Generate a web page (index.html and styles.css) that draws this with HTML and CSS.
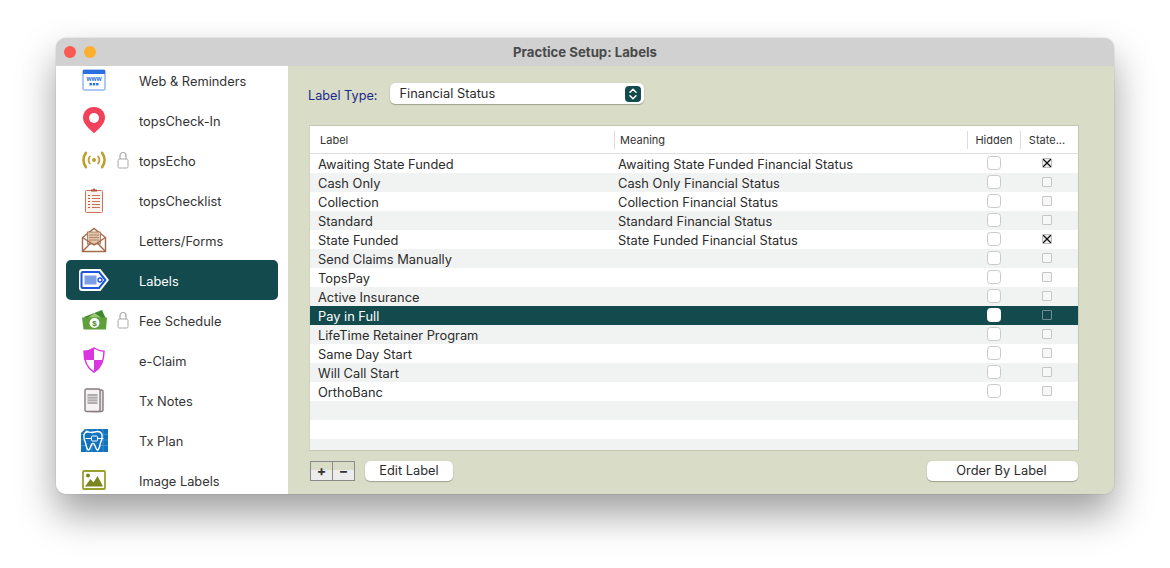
FILE: index.html
```html
<!DOCTYPE html>
<html lang="en">
<head>
<meta charset="utf-8">
<title>Practice Setup: Labels</title>
<link rel="stylesheet" href="styles.css">
</head>
<body>
<div class="window">
  <header class="titlebar">
    <span class="dot dot-red"></span>
    <span class="dot dot-orange"></span>
    <span class="title">Practice Setup: Labels</span>
  </header>
  <div class="content">
    <nav class="sidebar">
      <ul class="nav-list">
        <li class="nav-row">
          <span class="nav-icon"><svg width="24" height="22" viewBox="0 0 24 22"><rect x="1" y="1" width="22" height="20" rx="1" fill="#fff" stroke="#5f93ea"/><rect x="1" y="1" width="22" height="4" fill="#2a6fe0"/><text x="12" y="12" text-anchor="middle" class="www">www</text><rect x="7.500" y="14" width="2.400" height="2.400" fill="#2a6fe0"/><rect x="10.800" y="14" width="2.400" height="2.400" fill="#2a6fe0"/><rect x="14.100" y="14" width="2.400" height="2.400" fill="#2a6fe0"/></svg></span>
          <span class="nav-lock"></span><span class="nav-text">Web &amp; Reminders</span>
        </li>
        <li class="nav-row">
          <span class="nav-icon"><svg width="24" height="28" viewBox="0 0 24 28"><path d="M12 1C5.600 1 1 5.600 1 11.600c0 6 6 11.600 11 15.600 5-4 11-9.600 11-15.600C23 5.600 18.400 1 12 1z" fill="#f2415a"/><circle cx="12" cy="12" r="5" fill="#fff"/></svg></span>
          <span class="nav-lock"></span><span class="nav-text">topsCheck-In</span>
        </li>
        <li class="nav-row">
          <span class="nav-icon"><svg width="24" height="18" viewBox="0 0 24 18" fill="none" stroke="#bf9f30" stroke-linecap="round"><circle cx="12" cy="9" r="2" fill="#bf9f30" stroke="none"/><path d="M7.800 5.500a6 6 0 0 0 0 7M16.200 5.500a6 6 0 0 1 0 7" stroke-width="1.800"/><path d="M3.800 2a12 12 0 0 0 0 14M20.200 2a12 12 0 0 1 0 14" stroke-width="2.800"/></svg></span>
          <span class="nav-lock"><svg class="lock" width="12" height="18" viewBox="0 0 12 18"><path d="M3 8V4.500a3 3 0 0 1 6 0V8" fill="none" stroke="#a8a8a8" stroke-width="1.200"/><rect x="1" y="8" width="10" height="9" rx="1.500" fill="#fff" stroke="#a8a8a8"/></svg></span><span class="nav-text">topsEcho</span>
        </li>
        <li class="nav-row">
          <span class="nav-icon"><svg width="20" height="26" viewBox="0 0 20 26"><rect x="1.500" y="3.500" width="17" height="22" rx="1" fill="#fdf3ee" stroke="#c9745a"/><path d="M7 4.500V2.500h2L10 1l1 1.500h2v2z" fill="#b5533a"/><g stroke="#c9745a" stroke-width="1"><path d="M8 8.500h8M8 11.500h8M8 14.500h8M8 17.500h8M8 20.500h8"/><path d="M4 8.500h2M4 11.500h2M4 14.500h2M4 17.500h2M4 20.500h2" stroke="#d84a30"/></g></svg></span>
          <span class="nav-lock"></span><span class="nav-text">topsChecklist</span>
        </li>
        <li class="nav-row">
          <span class="nav-icon"><svg width="26" height="26" viewBox="0 0 26 26"><path d="M1.500 10.500 13 1.500l11.500 9v14h-23z" fill="#fff" stroke="#a5694a" stroke-width="1.400"/><rect x="6.500" y="5" width="13" height="12" fill="#e2c6ae" stroke="#a5694a" stroke-width=".8"/><path d="M8 8h10M8 10.500h10M8 13h10" stroke="#b08468"/><path d="M1.500 10.500 13 18l11.500-7.500M1.500 24.500 10 15.800M24.500 24.500 16 15.800" fill="none" stroke="#a5694a" stroke-width="1.400"/></svg></span>
          <span class="nav-lock"></span><span class="nav-text">Letters/Forms</span>
        </li>
        <li class="nav-row nav-row-active">
          <span class="nav-icon"><svg width="32" height="24" viewBox="0 0 32 24"><path d="M4 1h18.500L31 12l-8.500 11H4a3 3 0 0 1-3-3V4a3 3 0 0 1 3-3z" fill="#fff"/><path d="M5 4h16l6.500 8-6.500 8H5a1.500 1.500 0 0 1-1.500-1.500v-13A1.500 1.500 0 0 1 5 4z" fill="#fff" stroke="#1d55e0" stroke-width="2"/><rect x="6.500" y="7.500" width="12" height="9" fill="#7f9ee8"/><circle cx="22" cy="12" r="2" fill="#fff" stroke="#1d55e0" stroke-width="1.400"/></svg></span>
          <span class="nav-lock"></span><span class="nav-text">Labels</span>
        </li>
        <li class="nav-row">
          <span class="nav-icon"><svg width="27" height="20" viewBox="0 0 27 20"><path d="M3 7 21 0l4 9-16 6z" fill="#3f8a2c"/><path d="M1 7.500h25L25 19.500H2.500z" fill="#5f9e3a"/><path d="M7 7.500 13.500 3 20 7.500z" fill="#9cc873"/><circle cx="13.500" cy="13" r="5" fill="#fff"/><text x="13.500" y="16" text-anchor="middle" class="dollar">$</text></svg></span>
          <span class="nav-lock"><svg class="lock" width="12" height="18" viewBox="0 0 12 18"><path d="M3 8V4.500a3 3 0 0 1 6 0V8" fill="none" stroke="#a8a8a8" stroke-width="1.200"/><rect x="1" y="8" width="10" height="9" rx="1.500" fill="#fff" stroke="#a8a8a8"/></svg></span><span class="nav-text">Fee Schedule</span>
        </li>
        <li class="nav-row">
          <span class="nav-icon"><svg width="22" height="26" viewBox="0 0 22 26"><path d="M11 1C8 3 4.500 4 1 4.200c0 9 2.500 16.500 10 21 7.500-4.500 10-12 10-21C17.500 4 14 3 11 1z" fill="#fff" stroke="#d936e0" stroke-width="1.500"/><path d="M11 1v12H1.300C1 10 1 7 1 4.200 4.500 4 8 3 11 1zM11 13h9.200C19 18 16 22 11 25.200z" fill="#d936e0"/></svg></span>
          <span class="nav-lock"></span><span class="nav-text">e-Claim</span>
        </li>
        <li class="nav-row">
          <span class="nav-icon"><svg width="20" height="25" viewBox="0 0 20 25"><rect x="6" y="2" width="13" height="21.500" rx="1.500" fill="#e6e2e4" stroke="#867a80" stroke-width="1.400"/><rect x="1" y="1" width="15" height="22.500" rx="1.500" fill="#f4f2f3" stroke="#867a80" stroke-width="1.400"/><rect x="3.500" y="6" width="10" height="10" fill="#b0acae"/><path d="M3.500 8.500h10M3.500 11h10M3.500 13.500h10" stroke="#d6d3d4"/></svg></span>
          <span class="nav-lock"></span><span class="nav-text">Tx Notes</span>
        </li>
        <li class="nav-row">
          <span class="nav-icon"><svg width="27" height="23" viewBox="0 0 27 23"><path d="M4 0h23v23H0V4z" fill="#1272bd"/><path d="M0 5.500h27M0 11h27M0 16.500h27M5.500 0v23M11 0v23M16.500 0v23M22 0v23" stroke="#5aa3dc" stroke-width=".6"/><path d="M7.500 2.500c-4 0-5 3-4.500 6.500.5 3 1.500 4 2 7 .5 2 1 5 2.500 5s1.800-3 3-5.500c.7-1.300 2.300-1.300 3 0 1.200 2.500 1.500 5.500 3 5.500s2-3 2.500-5c.5-3 1.500-4 2-7 .5-3.500-.5-6.500-4.500-6.500-2 0-4 1-6 1s-3-1-6-1z" fill="#1272bd" stroke="#fff" stroke-width="1.400"/><path d="M4.500 9.500h18" stroke="#fff"/><rect x="10.500" y="7" width="6" height="5" rx="1" fill="#1272bd" stroke="#fff"/></svg></span>
          <span class="nav-lock"></span><span class="nav-text">Tx Plan</span>
        </li>
        <li class="nav-row">
          <span class="nav-icon"><svg width="24" height="20" viewBox="0 0 24 20"><rect x="1" y="1" width="22" height="18" rx="1" fill="#fff" stroke="#98a030" stroke-width="1.800"/><circle cx="6" cy="5.500" r="2" fill="#7a861c"/><path d="M3 16.500 8.500 9l3 3.500L15.500 6 21 16.500z" fill="#7a861c"/></svg></span>
          <span class="nav-lock"></span><span class="nav-text">Image Labels</span>
        </li>
      </ul>
    </nav>
    <main class="panel">
      <div class="type-row">
        <span class="type-label">Label Type:</span>
        <div class="select">
          <span class="select-text">Financial Status</span>
          <span class="select-arrows"><svg width="10" height="14" viewBox="0 0 10 14" fill="none" stroke="#fff" stroke-width="1.500" stroke-linecap="round" stroke-linejoin="round"><path d="M2 5.200 5 2.200l3 3M2 8.800l3 3 3-3"/></svg></span>
        </div>
      </div>
      <div class="table">
        <div class="thead">
          <span class="th col-label">Label</span>
          <span class="th col-meaning">Meaning</span>
          <span class="th col-hidden">Hidden</span>
          <span class="th col-state">State...</span>
        </div>
        <div class="row"><span class="td col-label">Awaiting State Funded</span><span class="td col-meaning">Awaiting State Funded Financial Status</span><span class="col-hidden"><span class="check"></span></span><span class="col-state"><span class="mini mini-x"><svg width="8" height="8" viewBox="0 0 8 8"><path d="M0 0l8 8M8 0l-8 8" stroke="#111" stroke-width="1.300"/></svg></span></span></div>
        <div class="row"><span class="td col-label">Cash Only</span><span class="td col-meaning">Cash Only Financial Status</span><span class="col-hidden"><span class="check"></span></span><span class="col-state"><span class="mini"></span></span></div>
        <div class="row"><span class="td col-label">Collection</span><span class="td col-meaning">Collection Financial Status</span><span class="col-hidden"><span class="check"></span></span><span class="col-state"><span class="mini"></span></span></div>
        <div class="row"><span class="td col-label">Standard</span><span class="td col-meaning">Standard Financial Status</span><span class="col-hidden"><span class="check"></span></span><span class="col-state"><span class="mini"></span></span></div>
        <div class="row"><span class="td col-label">State Funded</span><span class="td col-meaning">State Funded Financial Status</span><span class="col-hidden"><span class="check"></span></span><span class="col-state"><span class="mini mini-x"><svg width="8" height="8" viewBox="0 0 8 8"><path d="M0 0l8 8M8 0l-8 8" stroke="#111" stroke-width="1.300"/></svg></span></span></div>
        <div class="row"><span class="td col-label">Send Claims Manually</span><span class="td col-meaning"></span><span class="col-hidden"><span class="check"></span></span><span class="col-state"><span class="mini"></span></span></div>
        <div class="row"><span class="td col-label">TopsPay</span><span class="td col-meaning"></span><span class="col-hidden"><span class="check"></span></span><span class="col-state"><span class="mini"></span></span></div>
        <div class="row"><span class="td col-label">Active Insurance</span><span class="td col-meaning"></span><span class="col-hidden"><span class="check"></span></span><span class="col-state"><span class="mini"></span></span></div>
        <div class="row row-selected"><span class="td col-label">Pay in Full</span><span class="td col-meaning"></span><span class="col-hidden"><span class="check"></span></span><span class="col-state"><span class="mini"></span></span></div>
        <div class="row"><span class="td col-label">LifeTime Retainer Program</span><span class="td col-meaning"></span><span class="col-hidden"><span class="check"></span></span><span class="col-state"><span class="mini"></span></span></div>
        <div class="row"><span class="td col-label">Same Day Start</span><span class="td col-meaning"></span><span class="col-hidden"><span class="check"></span></span><span class="col-state"><span class="mini"></span></span></div>
        <div class="row"><span class="td col-label">Will Call Start</span><span class="td col-meaning"></span><span class="col-hidden"><span class="check"></span></span><span class="col-state"><span class="mini"></span></span></div>
        <div class="row"><span class="td col-label">OrthoBanc</span><span class="td col-meaning"></span><span class="col-hidden"><span class="check"></span></span><span class="col-state"><span class="mini"></span></span></div>
        <div class="row"></div>
        <div class="row"></div>
        <div class="row row-last"></div>
      </div>
      <div class="actions">
        <div class="stepper"><span class="step">+</span><span class="step">−</span></div>
        <span class="btn btn-edit">Edit Label</span>
        <span class="btn btn-order">Order By Label</span>
      </div>
    </main>
  </div>
</div>
</body>
</html>
```
FILE: styles.css
```css
* { box-sizing: border-box; }
html, body { margin: 0; height: 100%; }
body {
  background: #fff;
  padding: 38px 56px 0;
  overflow: hidden;
  font-family: Inter, "Liberation Sans", sans-serif;
  font-size: 13px;
  color: #2b2b2b;
}
.window {
  width: 1058px;
  height: 456px;
  border-radius: 10px;
  overflow: hidden;
  display: flex;
  flex-direction: column;
  box-shadow: 0 0 1px rgba(0,0,0,.5), 0 20px 38px rgba(0,0,0,.38);
}
.titlebar {
  height: 28px;
  flex: none;
  background: #d1d1d1;
  display: flex;
  align-items: center;
  padding-left: 8px;
  gap: 8px;
  position: relative;
}
.dot { width: 12px; height: 12px; border-radius: 50%; }
.dot-red { background: #fb5a52; }
.dot-orange { background: #fdb02f; }
.title {
  position: absolute;
  left: 0; right: 0;
  text-align: center;
  font-weight: 700;
  font-size: 13.2px;
  color: #4a4a4a;
}
.content { flex: 1; display: flex; min-height: 0; }
.sidebar { width: 232px; flex: none; background: #fff; overflow: hidden; }
.nav-list { list-style: none; margin: -6px 10px 0; padding: 0; }
.nav-row {
  height: 40px;
  padding-left: 10px;
  display: grid;
  grid-template-columns: 36px 27px 1fr;
  align-items: center;
  border-radius: 5px;
  font-size: 12.85px;
  color: #333;
}
.nav-row-active { background: #134a4e; color: #fff; }
.nav-icon { display: flex; justify-content: center; align-items: center; }
.nav-lock { display: flex; align-items: center; padding-left: 5px; }
.nav-text { padding-top: 3px; }
.www { font: 700 6.5px "Liberation Sans", sans-serif; fill: #2a6fe0; }
.dollar { font: 700 8px "Liberation Sans", sans-serif; fill: #3f8a2c; }
.panel {
  flex: 1;
  background: #d9dcc6;
  padding: 17px 36px 13px 20px;
  display: flex;
  flex-direction: column;
}
.type-row { display: flex; align-items: center; height: 21px; gap: 13px; }
.type-label { color: #1a2a8a; font-size: 12.7px; padding-top: 3px; }
.select {
  width: 254px;
  height: 21px;
  background: #fff;
  border-radius: 5px;
  box-shadow: 0 1px 1px rgba(0,0,0,.25), 0 0 1px rgba(0,0,0,.2);
  display: flex;
  align-items: center;
  justify-content: space-between;
  padding: 0 3px 0 9px;
  font-size: 12.85px;
}
.select-arrows {
  width: 16px;
  height: 16px;
  background: #134a4e;
  border-radius: 4px;
  display: flex;
  align-items: center;
  justify-content: center;
}
.table {
  margin: 21px -1px 0 1px;
  height: 327px;
  background: #fff;
  border: 1px solid #c4c7b2;
  border-left-color: #d0d3be;
  overflow: hidden;
}
.thead {
  height: 28px;
  display: flex;
  align-items: center;
  border-bottom: 1px solid #dfdfdf;
  font-size: 11px;
  color: #333;
}
.row { height: 19px; display: flex; align-items: center; font-size: 12.85px; color: #2b2b2b; }
.row:nth-child(odd) { background: #f1f3f2; }
.row-last { height: 12px; }
.row.row-selected { background: #134a4e; color: #fff; }
.td { padding-top: 2px; }
.col-label { width: 304px; flex: none; padding-left: 8px; }
.col-meaning { width: 353px; flex: none; padding-left: 4px; }
.col-hidden { width: 53px; flex: none; display: flex; justify-content: center; }
.col-state { width: 53px; flex: none; display: flex; justify-content: center; }
.th { height: 18px; line-height: 18px; display: block; }
.th.col-label { padding-left: 10px; }
.th.col-meaning { padding-left: 5px; border-left: 1px solid #dcdcdc; }
.th.col-hidden { border-left: 1px solid #dcdcdc; display: block; text-align: center; }
.th.col-state { border-left: 1px solid #dcdcdc; display: block; text-align: center; }
.check {
  width: 14px;
  height: 14px;
  margin-bottom: 1px;
  border: 1px solid #c9c9c9;
  border-radius: 3.5px;
  background: #fff;
  display: block;
}
.mini {
  width: 10px;
  height: 10px;
  margin-bottom: 1px;
  border: 1.5px solid #c6c6c6;
  background: #f7f7f7;
  border-radius: 1px;
  display: flex;
  align-items: center;
  justify-content: center;
}
.mini-x { border: 1px solid #bdbdbd; background: #ececec; }
.row-selected .mini { background: #134a4e; border-color: #6f8e90; }
.row-selected .check { border-color: #fff; }
.actions { display: flex; align-items: center; margin: 9px 0 0 2px; height: 21px; }
.stepper {
  display: flex;
  width: 45px;
  height: 20px;
  border: 1px solid #8a8a8a;
  background: linear-gradient(#d9dcc6 0 45%, #ececec 45% 100%);
}
.step {
  flex: 1;
  text-align: center;
  font-weight: 700;
  font-size: 14px;
  line-height: 17px;
  color: #333;
}
.step + .step { border-left: 1px solid #8a8a8a; }
.btn {
  height: 20px;
  background: #fff;
  border-radius: 5px;
  box-shadow: 0 1px 1px rgba(0,0,0,.25), 0 0 1px rgba(0,0,0,.2);
  display: flex;
  align-items: center;
  justify-content: center;
  font-size: 12.85px;
  color: #2b2b2b;
}
.btn-edit { width: 88px; margin-left: 10px; }
.btn-order { width: 151px; margin-left: auto; padding-right: 2px; }
```
